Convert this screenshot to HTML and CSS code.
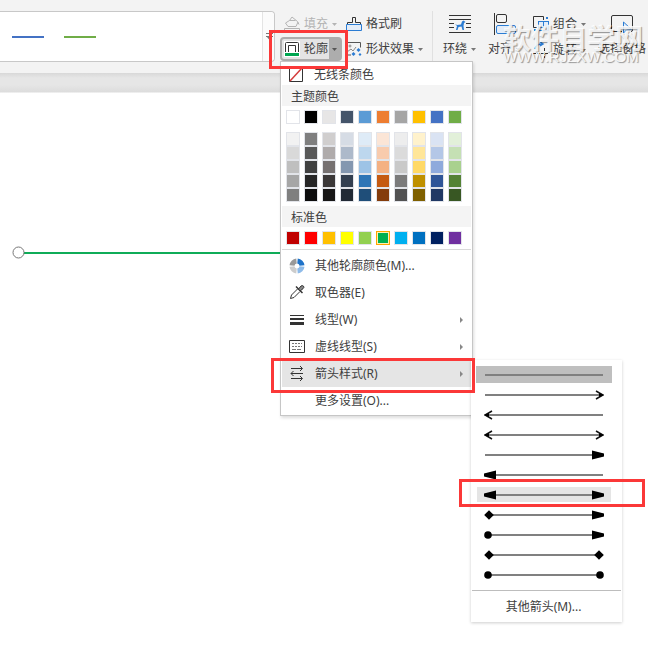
FILE: index.html
```html
<!DOCTYPE html>
<html lang="zh-CN">
<head>
<meta charset="utf-8">
<title>轮廓</title>
<link rel="stylesheet" href="styles.css">
</head>
<body>
<svg class="defs" aria-hidden="true">
  <symbol id="caret" viewBox="0 0 5 3"><path d="M0 0h5L2.500 3z" fill="currentColor"/></symbol>
  <symbol id="shaft" viewBox="0 0 120 14"><path d="M1 7h118" stroke="#808080" stroke-width="2"/></symbol>
  <symbol id="open" viewBox="0 0 12 14"><path d="M4 3l7 4-7 4" fill="none" stroke="#111" stroke-width="1.600"/><path d="M7 5l5 2-5 2z"/></symbol>
  <symbol id="solid" viewBox="0 0 12 14"><path d="M0 2.500l12 3v3L0 11.500z"/></symbol>
  <symbol id="diamond" viewBox="0 0 12 14"><path d="M7 2.200L11.800 7 7 11.800 2.200 7z"/></symbol>
  <symbol id="dot" viewBox="0 0 12 14"><circle cx="8" cy="7" r="3.800"/></symbol>
</svg>

<header class="ribbon">
  <div class="gallery">
    <button class="line blue" aria-label="蓝色线条"></button>
    <button class="line green" aria-label="绿色线条"></button>
    <button class="more" aria-label="更多样式"><svg width="7" height="7" viewBox="0 0 7 7"><path d="M0 .5h7M0 3.500h7" stroke="#777"/><path d="M1 4h5L3.500 7z" fill="#777"/></svg></button>
  </div>

  <div class="tools pair">
    <button class="tool inset disabled">
      <svg width="16" height="16" viewBox="0 0 16 16" fill="none" stroke="#b4b4b4"><path d="M5.500 4.500L8 1l5.500 4.500L15 8.500M5.500 4.500L1.500 7l2.500 3.500h8L14 6M5.500 4.500h6"/><path d="M.5 12.500h15v3H.5z"/></svg>
      <span>填充</span><svg class="caret"><use href="#caret"/></svg>
    </button>
    <button class="tool">
      <svg width="16" height="16" viewBox="0 0 16 16" fill="none"><path d="M1.500 9V6.500h5v-5h3v5h5V9" stroke="#333"/><path d="M.5 8.500h15v6H.5z" fill="#e3edf9" stroke="#2b7cd3"/></svg>
      <span>格式刷</span>
    </button>
    <button class="tool inset active">
      <svg width="16" height="16" viewBox="0 0 16 16"><path d="M0 0h16v16H0z" fill="#fff"/><path d="M1.500 11V2.500q0-1 1-1h11q1 0 1 1V11M4.500 11V4.500h7V11" fill="none" stroke="#333"/><path d="M1 12h14v3H1z" fill="#00a651"/></svg>
      <span>轮廓</span><span class="drop"><svg class="caret"><use href="#caret"/></svg></span>
    </button>
    <button class="tool">
      <svg width="16" height="16" viewBox="0 0 16 16" fill="none"><path d="M1 1.500h13.500v5M.5 9v5H5" stroke="#555"/><circle cx="4" cy="5" r="1" stroke="#888"/><path d="M1 11l4-3 2 2 3-4" stroke="#888"/><path d="M12.500 7l2 2-2 2-2-2zM7.500 11l2 2-2 2-2-2zM14 12l1.500 1.500L14 15l-1.500-1.500z" fill="#2b7cd3"/></svg>
      <span>形状效果</span><svg class="caret"><use href="#caret"/></svg>
    </button>
  </div>

  <div class="tools arrange">
    <button class="big">
      <span class="pic"><svg width="22" height="20" viewBox="0 0 22 20"><path d="M0 1.500h22M0 5.500h22M0 9.500h5M17 9.500h5M0 13.500h5M17 13.500h5M0 18.500h22" stroke="#333"/><path d="M6 10l2 1 4-.5 1-3 1.500-1 2 1.500-1.500 1-.5 3 .5 4h-1.500l-1-3.500-3 .5-1 3H7l1-4z" fill="#2b7cd3"/></svg></span>
      <span class="label">环绕<svg class="caret"><use href="#caret"/></svg></span>
    </button>
    <button class="big">
      <span class="pic"><svg width="22" height="22" viewBox="0 0 22 22" fill="none"><path d="M.5 0v22" stroke="#333"/><rect x="2.500" y="1.500" width="10" height="8" rx="1.500" stroke="#333"/><rect x="2.500" y="12.500" width="19" height="8" rx="1.500" fill="#e3edf9" stroke="#2b7cd3"/></svg></span>
      <span class="label">对齐<svg class="caret"><use href="#caret"/></svg></span>
    </button>
    <div class="stack">
      <button class="tool">
        <svg width="16" height="16" viewBox="0 0 16 16" fill="none"><path d="M4 11.500H.5v-11h10V4" stroke="#333"/><rect x="5.500" y="5.500" width="10" height="9" fill="#e3edf9" stroke="#2b7cd3"/><path d="M5.500 11.500h5v-6" stroke="#2b7cd3"/><path d="M13 1h2v2h-2zM1 13h2v2H1z" fill="#2b7cd3"/></svg>
        <span>组合</span><svg class="caret"><use href="#caret"/></svg>
      </button>
      <button class="tool">
        <svg width="16" height="16" viewBox="0 0 16 16" fill="none"><path d="M2 7q1-5 7-5M7 0l3 2-3 2" stroke="#2b7cd3" stroke-width="1.500"/><path d="M0 11.500h16M11.500 6v10" stroke="#333" stroke-dasharray="3 1"/></svg>
        <span>旋转</span><svg class="caret"><use href="#caret"/></svg>
      </button>
    </div>
    <button class="big">
      <span class="pic"><svg width="22" height="20" viewBox="0 0 22 20" fill="none"><path d="M11 17.500H2q-1.500 0-1.500-1.500V3Q.5 1.500 2 1.500h18q1.500 0 1.500 1.500v13q0 1.500-1.500 1.500" stroke="#333"/><path d="M12.500 8v11l3-3 5-.5z" fill="#e3edf9" stroke="#2b7cd3"/></svg></span>
      <span class="label">选择窗格</span>
    </button>
  </div>
</header>

<main class="canvas">
  <div class="shape"><svg class="handle" width="13" height="13" viewBox="0 0 13 13"><circle cx="6.500" cy="6.500" r="5.500" fill="#fff" stroke="#777"/></svg></div>
</main>

<section class="menu" aria-label="轮廓">
  <button class="item none">
    <svg width="16" height="16" viewBox="0 0 16 16"><path d="M1.500 0v14.500h13V0" fill="#fff" stroke="#333"/><path d="M2 14L14 1" stroke="#d43c3c" stroke-width="1.500"/></svg>
    <span>无线条颜色</span>
  </button>
  <h2>主题颜色</h2>
  <div class="swatches" id="theme"></div>
  <div class="swatches shades" id="shades"></div>
  <h2>标准色</h2>
  <div class="swatches" id="standard"></div>
  <hr>
  <button class="item">
    <svg width="16" height="16" viewBox="0 0 16 16" fill="none" stroke-width="5"><path d="M8.500 3A5 5 0 0 1 13 7.500" stroke="#1f73c9"/><path d="M13 8.500A5 5 0 0 1 8.500 13" stroke="#8ebbe9"/><path d="M7.500 13A5 5 0 0 1 3 8.500" stroke="#ccc"/><path d="M3 7.500A5 5 0 0 1 7.500 3" stroke="#999"/></svg>
    <span>其他轮廓颜色(M)...</span>
  </button>
  <button class="item">
    <svg width="16" height="16" viewBox="0 0 16 16" fill="none" stroke="#333"><path d="M8.500 4L2.500 10 1.500 13.500l3.500-1L11 6.500"/><path d="M7 1.500L13.500 8" stroke-width="1.500"/><path d="M9.500 4l2.500-3q1.500-1 2.500.2t-.5 2.500l-3 2.300z" fill="#888"/></svg>
    <span>取色器(E)</span>
  </button>
  <button class="item">
    <svg width="16" height="16" viewBox="0 0 16 16"><path d="M1 3h14v1H1zM1 6h14v2H1zM1 10h14v3H1z" fill="#333"/></svg>
    <span>线型(W)</span><i class="next"></i>
  </button>
  <button class="item">
    <svg width="16" height="16" viewBox="0 0 16 16" fill="none"><path d="M.5 1.500h15v12H.5z" stroke="#333"/><path d="M3 4.500h10M3 7.500h10" stroke="#777" stroke-dasharray="2 1"/><path d="M3 10.500h10" stroke="#777" stroke-dasharray="4 1"/></svg>
    <span>虚线线型(S)</span><i class="next"></i>
  </button>
  <button class="item current">
    <svg width="16" height="16" viewBox="0 0 16 16" fill="none" stroke="#333"><path d="M2 2.500h11M11 0l2.500 2.500L11 5M14 7.500H2M4.500 5L2 7.500 4.500 10M2 12.500h11M11 10l2.500 2.500L11 15"/></svg>
    <span>箭头样式(R)</span><i class="next"></i>
  </button>
  <button class="item">
    <svg width="16" height="16"></svg>
    <span>更多设置(O)...</span>
  </button>
</section>

<section class="submenu" aria-label="箭头样式">
  <div class="arrows" id="arrows"></div>
  <hr>
  <button class="other">其他箭头(M)...</button>
</section>

<div class="mark mark-outline"></div>
<div class="mark mark-style"></div>
<div class="mark mark-arrow"></div>
<div class="watermark"><strong>软件自学网</strong><span>WWW.RJZXW.COM</span></div>

<script src="app.js"></script>
</body>
</html>
```
FILE: styles.css
```css
* { box-sizing: border-box; }

body {
  margin: 0;
  min-height: 100vh;
  display: flex;
  flex-direction: column;
  position: relative;
  overflow: hidden;
  background: #fff;
  color: #404040;
  font: 12px/16px "Noto Sans", "Noto Sans CJK SC", sans-serif;
}

button {
  margin: 0;
  padding: 0;
  border: 0;
  background: none;
  color: inherit;
  font: inherit;
  text-align: left;
  white-space: nowrap;
}

svg { flex: none; display: block; }
.defs { position: absolute; width: 0; height: 0; }

/* Ribbon */
.ribbon {
  display: flex;
  align-items: flex-start;
  padding: 11px 0;
  background: #f3f3f3;
}

.gallery {
  flex: 0 1 275px;
  height: 51px;
  display: flex;
  align-items: center;
  gap: 20px;
  padding-left: 12px;
  border: 1px solid #c8c8c8;
  border-left: 0;
  border-radius: 0 4px 4px 0;
  background: #fff;
}
.line { width: 32px; height: 2px; }
.blue { background: #4472c4; }
.green { background: #70ad47; }
.more {
  align-self: stretch;
  width: 12px;
  margin-left: auto;
  padding-left: 3px;
  border-left: 1px solid #e4e4e4;
  background: #fbfbfb;
  border-radius: 0 4px 4px 0;
}

.pair {
  display: grid;
  grid-template: 26px 24px / 62px auto;
  column-gap: 4px;
  margin-left: 5px;
}
.tool { display: flex; align-items: center; gap: 4px; }
.inset { padding-left: 4px; }
.disabled { color: #b4b4b4; }
.caret { width: 5px; height: 3px; color: #777; }
.disabled .caret { color: #b4b4b4; }
.active {
  padding-left: 2px;
  border: 2px solid #adadad;
  border-radius: 4px;
  background: #e4e4e4;
}
.drop {
  align-self: stretch;
  flex: 1;
  display: flex;
  align-items: center;
  justify-content: center;
  margin-left: -3px;
  background: #adadad;
}
.drop .caret { color: #555; }

.arrange {
  display: flex;
  margin-left: 9px;
  padding-left: 10px;
  border-left: 1px solid #e0e0e0;
}
.big { display: flex; flex-direction: column; margin-right: 12px; }
.big:last-child { margin-right: 0; }
.pic {
  align-self: center;
  height: 26px;
  display: flex;
  align-items: center;
}
.label { height: 26px; display: flex; align-items: center; gap: 4px; }
.stack { display: grid; grid-template-rows: 26px 26px; margin-right: 12px; }
.arrange, .pair { height: 51px; }

/* Page */
.canvas {
  flex: 1;
  background: linear-gradient(#d8d8d8, #e6e6e6 5px, #e6e6e6 12px, #dcdcdc 19px, #fff 20px);
}
.shape {
  position: absolute;
  left: 18px;
  top: 252px;
  width: 262px;
  height: 2px;
  background: #0fac58;
}
.handle { position: absolute; left: -6px; top: -6px; }

/* Outline menu */
.menu {
  position: absolute;
  left: 280px;
  top: 61px;
  width: 193px;
  padding: 1px;
  border: 1px solid #c6c6c6;
  background: #fff;
  box-shadow: 1px 2px 3px #0002;
}
.menu h2 {
  margin: 0;
  height: 21px;
  padding-left: 9px;
  background: #f4f4f4;
  font: inherit;
  line-height: 23px;
}
.item {
  display: flex;
  align-items: center;
  gap: 10px;
  width: 100%;
  height: 27px;
  padding: 0 8px 0 7px;
}
.none { height: 22px; padding: 2px 0 0 6px; }
.current { background: #e5e5e5; }
.next {
  margin-left: auto;
  border: 3px solid transparent;
  border-left-color: #888;
  border-right: 0;
}
hr {
  margin: 0;
  border: 0;
  border-top: 1px solid #d9d9d9;
}
.menu hr { margin-bottom: 2px; }

.swatches {
  display: grid;
  grid-template-columns: repeat(10, 14px);
  column-gap: 4px;
  padding: 4px;
}
.swatches button {
  height: 14px;
  border: 1px solid #e2e4e9;
}
.swatches .chosen { border-color: #ffa500; box-shadow: inset 0 0 0 1px #fff0b0; }

/* Arrow submenu */
.submenu {
  position: absolute;
  left: 471px;
  top: 360px;
  width: 151px;
  padding: 6px 1px 1px;
  background: #fff;
  box-shadow: 0 1px 3px #0003;
}
.arrows { display: grid; gap: 3px; padding: 0 9px 7px 4px; }
.arrows button {
  height: 17px;
  padding: 1px 7px 0;
  border: 1px solid transparent;
  background-clip: padding-box;
}
.arrows .picked { border-color: #bfbfbf; background-color: #bfbfbf; }
.arrows .hover { background-color: #e5e5e5; }
.submenu hr { border-color: #bdbdbd; }
.other { width: 100%; height: 30px; padding: 2px 6px 0 0; text-align: center; }

/* Callouts */
.mark { position: absolute; border: 3px solid #fb3838; }
.mark-outline { left: 269px; top: 30px; width: 79px; height: 39px; }
.mark-style { left: 271px; top: 358px; width: 204px; height: 35px; }
.mark-arrow { left: 459px; top: 479px; width: 186px; height: 28px; }

.watermark {
  position: absolute;
  left: 503px;
  top: 25px;
  color: #fffd;
  text-shadow: 1px 1px 1px #0006;
}
.watermark strong { display: block; font-size: 28px; line-height: 26px; }
.watermark span { display: block; font: 15px/12px "Liberation Sans", sans-serif; }
```
FILE: app.js
```js
const theme = ['#fff', '#000', '#e7e6e6', '#44546a', '#5b9bd5', '#ed7d31', '#a5a5a5', '#ffc000', '#4472c4', '#70ad47'];
const shades = [
  '#f2f2f2', '#7f7f7f', '#d0cece', '#d6dce5', '#deebf7', '#fbe5d6', '#ededed', '#fff2cc', '#dae3f3', '#e2f0d9',
  '#d9d9d9', '#595959', '#afabab', '#adb9ca', '#bdd7ee', '#f8cbad', '#dbdbdb', '#ffe699', '#b4c7e7', '#c5e0b4',
  '#bfbfbf', '#404040', '#767171', '#8497b0', '#9dc3e6', '#f4b183', '#c9c9c9', '#ffd966', '#8faadc', '#a9d18e',
  '#a6a6a6', '#262626', '#3b3838', '#333f50', '#2e75b6', '#c55a11', '#7b7b7b', '#bf9000', '#2f5597', '#548235',
  '#7f7f7f', '#0d0d0d', '#181717', '#222a35', '#1f4e79', '#843c0c', '#525252', '#7f6000', '#203864', '#385723'
];
const standard = ['#c00000', '#ff0000', '#ffc000', '#ffff00', '#92d050', '#00b050', '#00b0f0', '#0070c0', '#002060', '#7030a0'];

function fill(id, colors, chosen) {
  document.getElementById(id).innerHTML = colors.map(c =>
    `<button aria-label="${c}" class="${c === chosen ? 'chosen' : ''}" style="background:${c}"></button>`).join('');
}
fill('theme', theme);
fill('shades', shades);
fill('standard', standard, '#00b050');

// Each entry is [start cap, end cap, state].
const arrows = [
  ['', '', 'picked'], ['', 'open'], ['open', ''], ['open', 'open'], ['', 'solid'], ['solid', ''],
  ['solid', 'solid', 'hover'], ['diamond', 'solid'], ['dot', 'solid'], ['diamond', 'diamond'], ['dot', 'dot']
];
const cap = (name, x) => name ? `<use href="#${name}" x="${x}" width="12" height="14"/>` : '';
document.getElementById('arrows').innerHTML = arrows.map(([start, end, state = '']) =>
  `<button class="${state}" aria-label="${start || 'none'} – ${end || 'none'}"><svg width="120" height="14" viewBox="0 0 120 14">
    <use href="#shaft" width="120" height="14"/>${cap(end, 108)}<g transform="matrix(-1 0 0 1 120 0)">${cap(start, 108)}</g></svg></button>`).join('');
```
